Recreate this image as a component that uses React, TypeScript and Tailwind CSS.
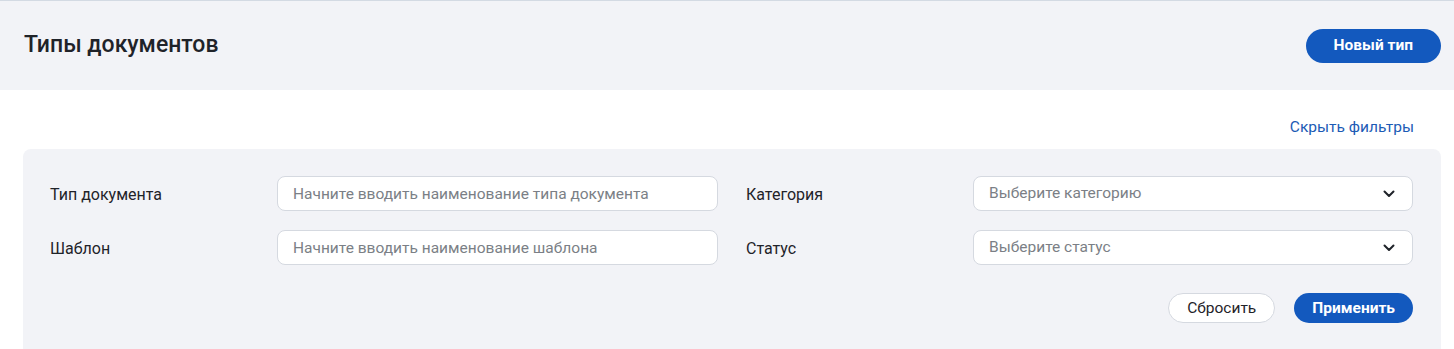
import React, { useState } from 'react';

const fieldClass =
    'h-[35px] w-full rounded-lg border border-[#d5d9e0] bg-white px-[15px] text-[15.5px] text-[#1f2329] placeholder:text-[#7b7f86] outline-none';

const Select: React.FC<{ placeholder: string }> = ({ placeholder }) => (
    <div className={`${fieldClass} flex items-center justify-between`}>
        <span className="text-[#7b7f86]">{placeholder}</span>
        <svg width="12" height="8" viewBox="0 0 12 8" fill="none" className="mr-[2px]">
            <path d="M1.5 1.5L6 6L10.5 1.5" stroke="#1f2329" strokeWidth="2" strokeLinecap="round" strokeLinejoin="round" />
        </svg>
    </div>
);

export default function App() {
    const [docType, setDocType] = useState('');
    const [template, setTemplate] = useState('');

    return (
        <div className="min-h-[349px] bg-white text-[#1f2329]" style={{ fontFamily: 'Roboto, "Noto Sans", sans-serif' }}>
            <div className="border-t border-[#d3dae3] bg-[#f2f3f7]">
                <div className="flex h-[89px] items-center justify-between pl-6 pr-[13px]">
                    <h1 className="text-[23px] font-medium">Типы документов</h1>
                    <button className="h-[34px] rounded-full bg-[#1359be] px-[28px] text-[15.5px] font-bold text-white">
                        Новый тип
                    </button>
                </div>
            </div>

            <div className="flex justify-end pr-10 pt-[26px]">
                <button className="text-[15.5px] text-[#1c5bb5]">Скрыть фильтры</button>
            </div>

            <div className="ml-[23px] mr-[13px] mt-[10px] rounded-t-lg bg-[#f2f3f7] pb-8 pl-[27px] pr-[28px] pt-[27px]">
                <div className="grid grid-cols-[227px_441px_255px_440px] items-center gap-y-[19px]">
                    <label className="pt-[2px] text-[16px]">Тип документа</label>
                    <input
                        className={fieldClass}
                        placeholder="Начните вводить наименование типа документа"
                        value={docType}
                        onChange={(e) => setDocType(e.target.value)}
                    />
                    <label className="pl-[28px] pt-[2px] text-[16px]">Категория</label>
                    <Select placeholder="Выберите категорию" />

                    <label className="pt-[2px] text-[16px]">Шаблон</label>
                    <input
                        className={fieldClass}
                        placeholder="Начните вводить наименование шаблона"
                        value={template}
                        onChange={(e) => setTemplate(e.target.value)}
                    />
                    <label className="pl-[28px] pt-[2px] text-[16px]">Статус</label>
                    <Select placeholder="Выберите статус" />
                </div>

                <div className="mt-[28px] flex justify-end gap-[19px]">
                    <button className="h-[30px] rounded-full border border-[#d5d9e0] bg-white px-[18px] text-[15.5px]">
                        Сбросить
                    </button>
                    <button className="h-[30px] rounded-full bg-[#1359be] px-[18px] text-[15.5px] font-bold text-white">
                        Применить
                    </button>
                </div>
            </div>
        </div>
    );
}
